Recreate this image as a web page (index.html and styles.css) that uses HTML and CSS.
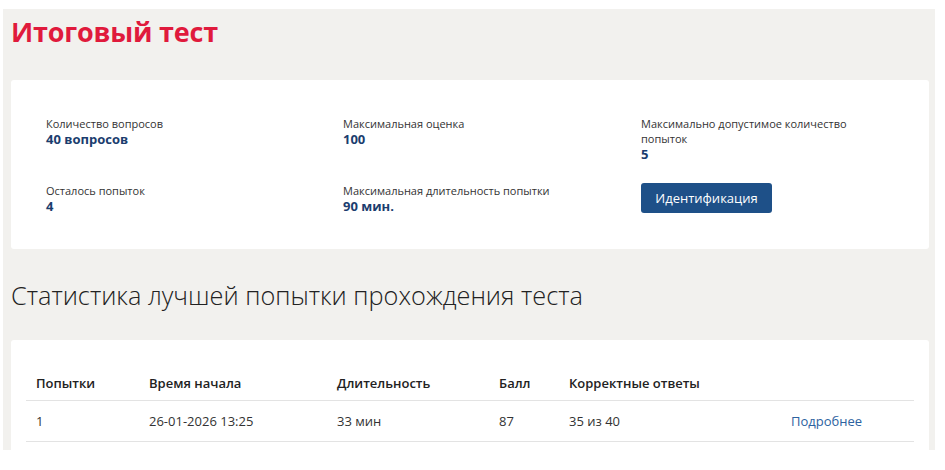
FILE: index.html
```html
<!DOCTYPE html>
<html lang="ru">
<head>
    <meta charset="UTF-8">
    <title>Итоговый тест</title>
    <link rel="stylesheet" href="styles.css">
</head>
<body>
    <div class="page">
        <h1 class="title">Итоговый тест</h1>

        <div class="card info">
            <div class="item">
                <div class="label">Количество вопросов</div>
                <div class="value">40 вопросов</div>
            </div>
            <div class="item">
                <div class="label">Максимальная оценка</div>
                <div class="value">100</div>
            </div>
            <div class="item">
                <div class="label">Максимально допустимое количество попыток</div>
                <div class="value">5</div>
            </div>
            <div class="item">
                <div class="label">Осталось попыток</div>
                <div class="value">4</div>
            </div>
            <div class="item">
                <div class="label">Максимальная длительность попытки</div>
                <div class="value">90 мин.</div>
            </div>
            <div class="item">
                <button class="btn">Идентификация</button>
            </div>
        </div>

        <h2 class="subtitle">Статистика лучшей попытки прохождения теста</h2>

        <div class="card stats">
            <table>
                <thead>
                    <tr>
                        <th class="c1">Попытки</th>
                        <th class="c2">Время начала</th>
                        <th class="c3">Длительность</th>
                        <th class="c4">Балл</th>
                        <th class="c5">Корректные ответы</th>
                        <th></th>
                    </tr>
                </thead>
                <tbody>
                    <tr>
                        <td>1</td>
                        <td>26-01-2026 13:25</td>
                        <td>33 мин</td>
                        <td>87</td>
                        <td>35 из 40</td>
                        <td><a href="#" class="more">Подробнее</a></td>
                    </tr>
                </tbody>
            </table>
        </div>
    </div>
</body>
</html>
```

FILE: styles.css
```css
* {
    margin: 0;
    padding: 0;
    box-sizing: border-box;
}

body {
    background-color: #fff;
    font-family: "Open Sans", "Noto Sans", sans-serif;
    color: #333;
}

.page {
    margin: 9px 0 0 3px;
    width: 932px;
    height: 441px;
    padding: 6px 6px 0 8px;
    background-color: #f2f1ee;
    overflow: hidden;
}

.title {
    color: #e01a3c;
    font-size: 27px;
    line-height: 34px;
    font-weight: 700;
    letter-spacing: -0.2px;
}

.card {
    background-color: #fff;
    border-radius: 3px;
}

/* блок с параметрами теста */
.info {
    margin-top: 31px;
    height: 169px;
    padding: 36px 35px 0 35px;
    display: grid;
    grid-template-columns: 297px 298px 1fr;
    align-content: start;
    row-gap: 21px;
}

.label {
    font-size: 11px;
    line-height: 15px;
    color: #333;
    max-width: 215px;
}

.value {
    font-size: 13px;
    line-height: 16px;
    font-weight: 700;
    color: #1b3d6e;
}

.btn {
    font-family: inherit;
    font-size: 13px;
    color: #fff;
    background-color: #1e5088;
    border: none;
    border-radius: 3px;
    width: 131px;
    height: 30px;
}

.subtitle {
    margin-top: 30px;
    font-size: 25.3px;
    line-height: 32px;
    font-weight: 300;
    color: #222;
}

/* таблица статистики */
.stats {
    margin-top: 29px;
    padding: 26px 15px 20px 15px;
}

table {
    width: 100%;
    border-collapse: collapse;
    font-size: 13px;
}

th {
    text-align: left;
    font-weight: 600;
    color: #222;
    line-height: 18px;
    padding: 8px 10px;
    border-bottom: 1px solid #e3e3e3;
}

td {
    line-height: 18px;
    padding: 11px 10px;
    border-bottom: 1px solid #e3e3e3;
    color: #333;
}

.c1 { width: 113px; }
.c2 { width: 188px; }
.c3 { width: 162px; }
.c4 { width: 70px; }
.c5 { width: 222px; }

.more {
    color: #2c62a0;
    text-decoration: none;
}
```
